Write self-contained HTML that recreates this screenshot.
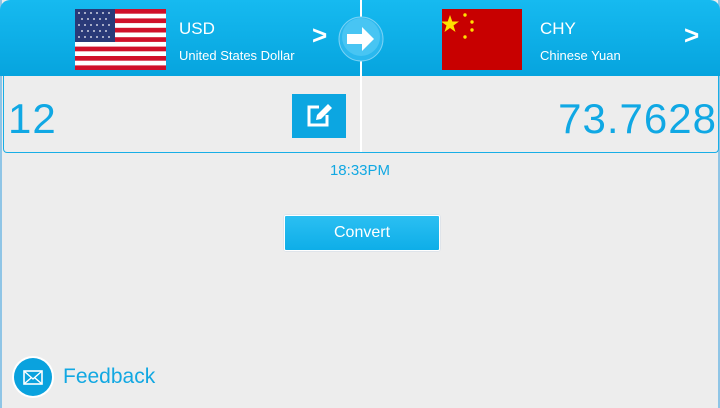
<!DOCTYPE html>
<html><head><meta charset="utf-8"><style>
*{margin:0;padding:0;box-sizing:border-box}
body{width:720px;height:408px;background:#ededed;font-family:"Liberation Sans",sans-serif;position:relative;overflow:hidden}
.edge{position:absolute;top:0;bottom:0;width:2px;background:#8fc5e6}
.hdr{position:absolute;left:0;top:0;width:720px;height:76px;border-radius:10px 10px 0 0;background:linear-gradient(#16baf0,#06a4de)}
.panel{position:absolute;left:3px;top:76px;width:716px;height:77px;border:1.5px solid #18aee6;border-top:none;border-radius:0 0 4px 4px}
.div{position:absolute;left:360px;top:0;width:2px;height:152px;background:#fff}
.t{position:absolute;color:#fff}
.code{font-size:17px;top:19px}
.name{font-size:13px;top:48px}
.gt{font-size:26px;font-weight:bold;top:20px}
.num{position:absolute;color:#10a8e4;font-size:42px;top:95px;letter-spacing:1px}
</style></head><body>
<div class="edge" style="left:0"></div><div class="edge" style="right:0"></div>
<div class="hdr"></div>
<div class="panel"></div>
<div class="div"></div>
<svg style="position:absolute;left:75px;top:9px" width="91" height="61" viewBox="0 0 91 61">
<rect width="91" height="61" fill="#fff"/>
<g fill="#d0102a"><rect y="0" width="91" height="4.7"/><rect y="9.4" width="91" height="4.7"/><rect y="18.8" width="91" height="4.7"/><rect y="28.2" width="91" height="4.7"/><rect y="37.6" width="91" height="4.7"/><rect y="47" width="91" height="4.7"/><rect y="56.4" width="91" height="4.6"/></g>
<rect width="40" height="33" fill="#2a3a78"/>
<g fill="#fff"><circle cx="4" cy="4" r=".9"/><circle cx="10" cy="4" r=".9"/><circle cx="16" cy="4" r=".9"/><circle cx="22" cy="4" r=".9"/><circle cx="28" cy="4" r=".9"/><circle cx="34" cy="4" r=".9"/>
<circle cx="7" cy="10" r=".9"/><circle cx="13" cy="10" r=".9"/><circle cx="19" cy="10" r=".9"/><circle cx="25" cy="10" r=".9"/><circle cx="31" cy="10" r=".9"/>
<circle cx="4" cy="16" r=".9"/><circle cx="10" cy="16" r=".9"/><circle cx="16" cy="16" r=".9"/><circle cx="22" cy="16" r=".9"/><circle cx="28" cy="16" r=".9"/><circle cx="34" cy="16" r=".9"/>
<circle cx="7" cy="22" r=".9"/><circle cx="13" cy="22" r=".9"/><circle cx="19" cy="22" r=".9"/><circle cx="25" cy="22" r=".9"/><circle cx="31" cy="22" r=".9"/>
<circle cx="4" cy="28" r=".9"/><circle cx="10" cy="28" r=".9"/><circle cx="16" cy="28" r=".9"/><circle cx="22" cy="28" r=".9"/><circle cx="28" cy="28" r=".9"/><circle cx="34" cy="28" r=".9"/></g>
</svg>
<svg style="position:absolute;left:442px;top:9px" width="80" height="61" viewBox="0 0 80 61">
<rect width="80" height="61" fill="#c80000"/>
<polygon fill="#ffe000" points="8,6 10.3,12.5 17,12.5 11.5,16.5 13.5,23 8,19 2.5,23 4.5,16.5 -1,12.5 5.7,12.5"/>
<circle cx="23" cy="6" r="1.7" fill="#ffe000"/><circle cx="30" cy="13" r="1.7" fill="#ffe000"/><circle cx="30" cy="21" r="1.7" fill="#ffe000"/><circle cx="23" cy="28" r="1.7" fill="#ffe000"/>
</svg>
<div class="t code" style="left:179px">USD</div>
<div class="t name" style="left:179px">United States Dollar</div>
<div class="t gt" style="left:312px">&gt;</div>
<div class="t code" style="left:540px">CHY</div>
<div class="t name" style="left:540px">Chinese Yuan</div>
<div class="t gt" style="left:684px">&gt;</div>
<svg style="position:absolute;left:338px;top:16px" width="46" height="46" viewBox="0 0 46 46">
<circle cx="23" cy="23" r="22" fill="#2ab8ee" stroke="#7ad2f5" stroke-width="1"/>
<circle cx="23" cy="21" r="19" fill="#48c5f3"/>
<path d="M9 18h15v-7l12 12-12 12v-7H9z" fill="#fff"/>
</svg>
<div class="num" style="left:8px">12</div>
<div style="position:absolute;left:292px;top:94px;width:54px;height:44px;background:#0ca6e1"></div>
<svg style="position:absolute;left:304px;top:101px" width="30" height="30" viewBox="0 0 30 30">
<path d="M15 6H5v18h18V14" fill="none" stroke="#fff" stroke-width="3"/>
<path d="M12 19l1-5 11-11 4 4-11 11z" fill="#fff"/>
</svg>
<div class="num" style="right:3px">73.7628</div>
<div style="position:absolute;left:0;width:720px;top:162px;text-align:center;color:#12a8e2;font-size:15px">18:33PM</div>
<div style="position:absolute;left:284px;top:215px;width:156px;height:36px;background:linear-gradient(#2bbff2,#0eaee8);border:1px solid #fff;box-shadow:0 0 1px #9bd;color:#fff;font-size:16px;text-align:center;line-height:34px;border-radius:2px">Convert</div>
<svg style="position:absolute;left:11px;top:355px" width="44" height="44" viewBox="0 0 44 44">
<circle cx="22" cy="22" r="21" fill="#fff"/>
<circle cx="22" cy="22" r="19" fill="#0aa2de"/>
<rect x="13" y="16" width="18" height="13" fill="none" stroke="#fff" stroke-width="1.6"/>
<path d="M13 16l9 8 9-8M13 29l7-6M31 29l-7-6" fill="none" stroke="#fff" stroke-width="1.4"/>
</svg>
<div style="position:absolute;left:63px;top:365px;color:#12a8e2;font-size:21px">Feedback</div>
</body></html>
